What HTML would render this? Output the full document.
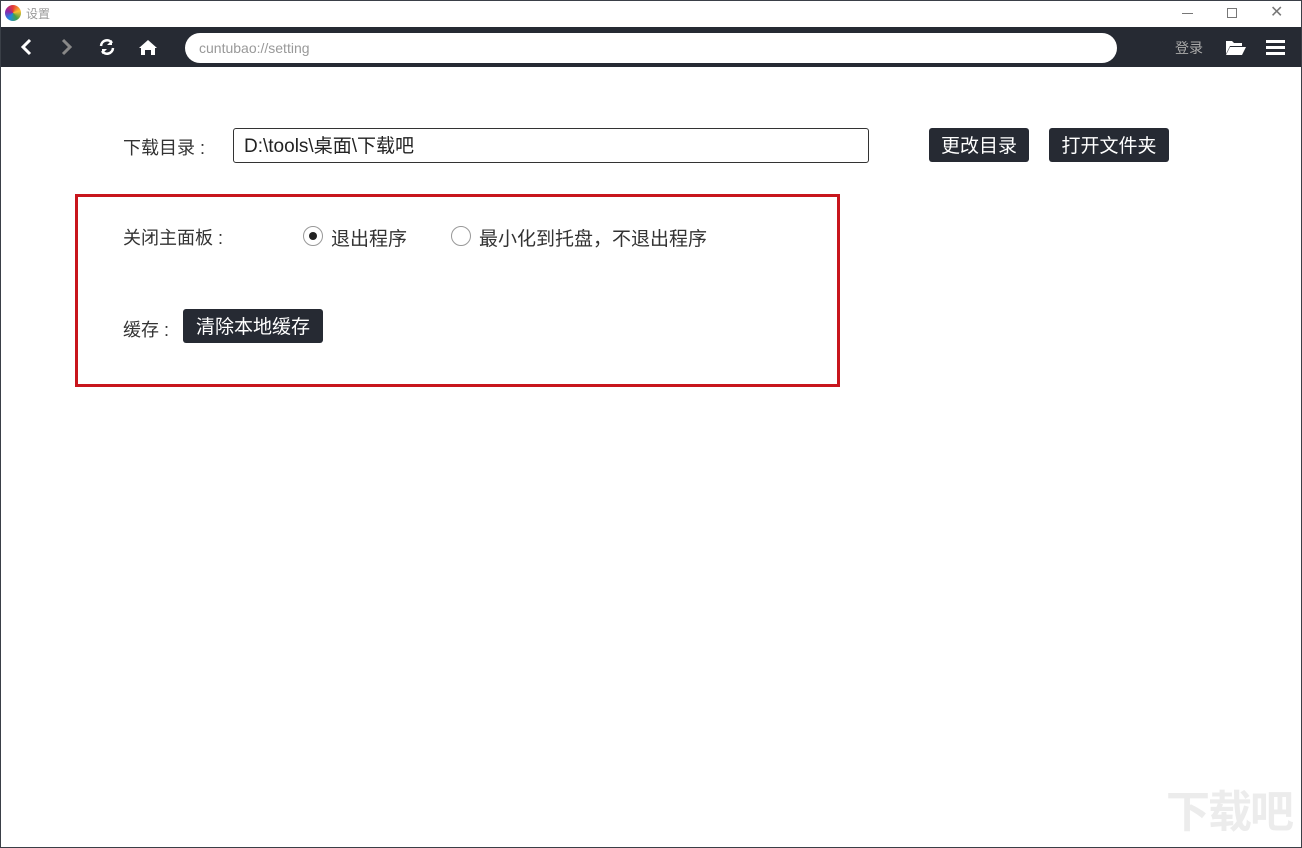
<!DOCTYPE html>
<html><head><meta charset="utf-8"><style>
*{margin:0;padding:0;box-sizing:border-box}
html,body{width:1302px;height:848px;overflow:hidden}
body{position:relative;background:#fff;font-family:"Liberation Sans","Noto Sans CJK SC",sans-serif}
.t{position:absolute;white-space:nowrap}
.title{left:0;top:0;width:1302px;height:27px;background:#fff}
.nav{left:0;top:27px;width:1302px;height:40px;background:#262a33}
.url{left:185px;top:33px;width:932px;height:30px;background:#fff;border-radius:15px;color:#999;font-size:14px;line-height:30px;padding-left:14px}
.lbl{font-size:18px;color:#333}
.btn{background:#262a33;color:#fff;font-size:19px;border-radius:3px;height:34px;line-height:37px;text-align:center}
.radio{width:20px;height:20px;border:1px solid #999;border-radius:50%}
</style></head><body>
<div class="t title"></div>
<div class="t" style="left:5px;top:5px;width:16px;height:16px;border-radius:50%;background:conic-gradient(#e53935,#fbc02d,#43a047,#1e88e5,#8e24aa,#e53935)"></div>
<div class="t" style="left:26px;top:5px;font-size:12px;color:#999">设置</div>
<div class="t" style="left:1182px;top:13px;width:11px;height:1px;background:#777"></div>
<div class="t" style="left:1227px;top:8px;width:10px;height:10px;border:1px solid #777"></div>
<div class="t" style="left:1270px;top:2px;font-size:16px;color:#777">✕</div>
<div class="t nav"></div>
<svg class="t" style="left:0;top:27px" width="180" height="40">
<path d="M30 13 L23 20 L30 27" stroke="#fff" stroke-width="3" fill="none"/>
<path d="M63 13 L70 20 L63 27" stroke="#888" stroke-width="3" fill="none"/>
<path d="M101 19 a6 6 0 0 1 11-3 M113 21 a6 6 0 0 1-11 3" stroke="#fff" stroke-width="2.5" fill="none"/>
<path d="M112 13v5h-5z M102 27v-5h5z" fill="#fff"/>
<path d="M139 21 L148 13 L157 21 L155 21 L155 28 L151 28 L151 23 L145 23 L145 28 L141 28 L141 21Z" fill="#fff"/>
</svg>
<div class="t url">cuntubao://setting</div>
<div class="t" style="left:1175px;top:38px;font-size:14px;color:#aaa">登录</div>
<svg class="t" style="left:1225px;top:38px" width="22" height="18"><path d="M1 3h6l2 2h8v3H5L1 16Z M5 9h16l-4 8H1Z" fill="#fff"/></svg>
<svg class="t" style="left:1266px;top:40px" width="20" height="16"><rect y="0" width="19" height="3" fill="#fff"/><rect y="6" width="19" height="3" fill="#fff"/><rect y="12" width="19" height="3" fill="#fff"/></svg>

<div class="t lbl" style="left:123px;top:134px">下载目录 :</div>
<div class="t" style="left:233px;top:128px;width:636px;height:35px;border:1px solid #333;border-radius:3px;font-size:19px;color:#222;line-height:35px;padding-left:10px">D:\tools\桌面\下载吧</div>
<div class="t btn" style="left:929px;top:128px;width:100px">更改目录</div>
<div class="t btn" style="left:1049px;top:128px;width:120px">打开文件夹</div>

<div class="t" style="left:75px;top:194px;width:765px;height:193px;border:3px solid #c8161d"></div>
<div class="t lbl" style="left:123px;top:224px">关闭主面板 :</div>
<div class="t radio" style="left:303px;top:226px"><div style="width:8px;height:8px;background:#222;border-radius:50%;margin:5px"></div></div>
<div class="t lbl" style="left:331px;top:224px;font-size:19px">退出程序</div>
<div class="t radio" style="left:451px;top:226px"></div>
<div class="t lbl" style="left:479px;top:224px;font-size:19px">最小化到托盘，不退出程序</div>
<div class="t lbl" style="left:123px;top:316px">缓存 :</div>
<div class="t btn" style="left:183px;top:309px;width:140px">清除本地缓存</div>
<div class="t" style="left:1166px;top:788px;font-size:44px;line-height:50px;color:#ececec;font-weight:bold;letter-spacing:-2px">下载吧</div>
<div class="t" style="left:0;top:0;width:1302px;height:848px;border:1px solid #3a3f47"></div>
</body></html>
